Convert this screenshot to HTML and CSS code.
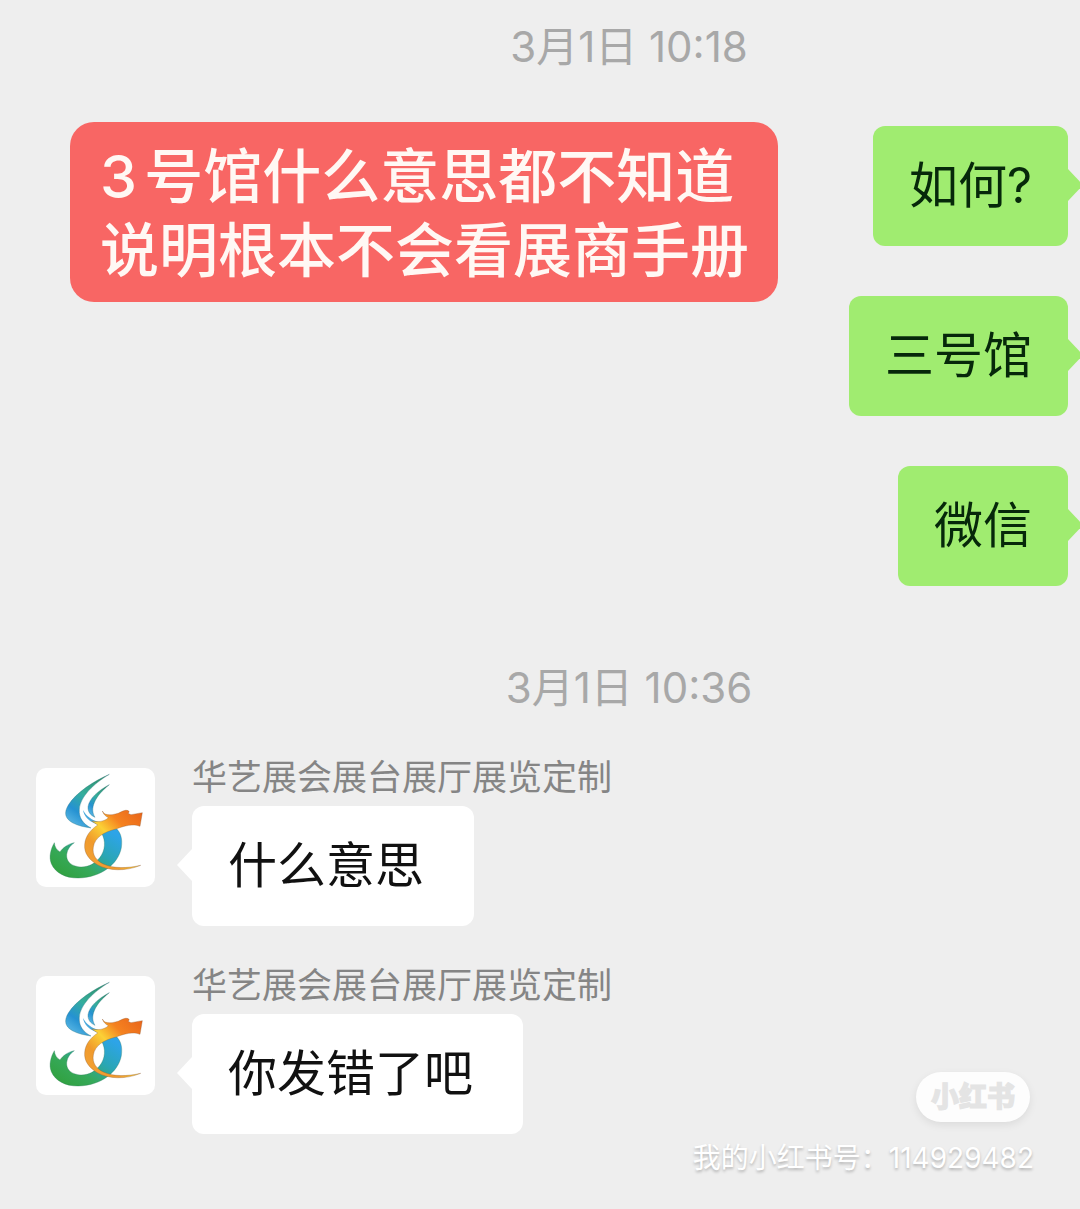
FILE: index.html
```
<!DOCTYPE html>
<html lang="zh-CN">
<head>
    <meta charset="UTF-8" />
    <meta name="viewport" content="width=device-width, initial-scale=1.0" />
    <title>聊天记录</title>
    <link rel="stylesheet" href="styles.css">
</head>
<body>
    <!-- logo compartido por los avatares -->
    <svg class="defs" aria-hidden="true">
        <defs>
            <linearGradient id="hoja" x1="0.8" y1="0" x2="0.2" y2="1">
                <stop offset="0" stop-color="#2f8f6a" />
                <stop offset="0.45" stop-color="#35ae9c" />
                <stop offset="0.75" stop-color="#2592d2" />
                <stop offset="1" stop-color="#5cb8e4" />
            </linearGradient>
            <linearGradient id="cuerpo" x1="1" y1="0" x2="0" y2="1">
                <stop offset="0.1" stop-color="#2da4e8" />
                <stop offset="0.4" stop-color="#2aa6b4" />
                <stop offset="0.65" stop-color="#36a95a" />
                <stop offset="1" stop-color="#2f9e35" />
            </linearGradient>
            <linearGradient id="dragon" x1="1" y1="0" x2="0" y2="1">
                <stop offset="0" stop-color="#e8631a" />
                <stop offset="0.3" stop-color="#f58220" />
                <stop offset="0.5" stop-color="#fbd136" />
                <stop offset="0.7" stop-color="#f09a2c" />
                <stop offset="1" stop-color="#f3a53a" />
            </linearGradient>
            <symbol id="logo" viewBox="30 38 357 357">
                <path fill="url(#hoja)" stroke="#2b6f78" stroke-width="1" d="M250 57C205 76 150 112 127 149C113 173 117 189 139 202C157 212 176 215 195 218C172 206 158 188 160 162C163 124 202 86 250 57Z" />
                <path fill="url(#hoja)" stroke="#2b6f78" stroke-width="1" d="M250 88C216 106 190 129 186 154C185 168 192 179 207 186C199 173 198 158 205 142C213 122 230 104 250 88Z" />
                <path fill="#4aa9dc" d="M171 164C174 184 190 202 222 209L216 199C200 195 181 184 171 164Z" />
                <path fill="url(#cuerpo)" stroke="#2c7a5c" stroke-width="1" d="M85 262C74 282 68 304 76 325C88 353 119 369 158 368C226 366 277 326 286 277C290 250 284 231 270 219L226 232C241 257 237 286 222 306C205 328 181 338 156 334C132 330 121 316 122 298C124 281 133 270 145 262C126 266 110 277 102 290C93 285 86 275 85 262Z" />
                <path fill="url(#dragon)" stroke="#8d5730" stroke-width="1" d="M229 167C235 179 249 181 268 176C281 174 287 167 298 165C309 164 313 170 306 174L315 178L349 172L342 213C321 204 294 212 270 221C233 230 207 246 202 275C198 299 211 316 232 326C261 340 304 339 344 330C298 349 247 347 214 328C189 313 174 293 176 268C178 242 193 224 215 209L197 197C221 202 239 196 247 187C239 183 232 177 229 167Z" />
            </symbol>
        </defs>
    </svg>

    <main class="chat">
        <time class="hora">3月1日 10:18</time>

        <section class="enviados">
            <h1 class="nota">3号馆什么意思都不知道<br>说明根本不会看展商手册</h1>
            <div class="lista">
                <p class="burbuja verde">如何?</p>
                <p class="burbuja verde">三号馆</p>
                <p class="burbuja verde">微信</p>
            </div>
        </section>

        <time class="hora">3月1日 10:36</time>

        <section class="recibidos">
            <article class="mensaje">
                <svg class="avatar" role="img" aria-label="华艺"><use href="#logo" /></svg>
                <div class="contenido">
                    <span class="nombre">华艺展会展台展厅展览定制</span>
                    <p class="burbuja blanca">什么意思</p>
                </div>
            </article>
            <article class="mensaje">
                <svg class="avatar" role="img" aria-label="华艺"><use href="#logo" /></svg>
                <div class="contenido">
                    <span class="nombre">华艺展会展台展厅展览定制</span>
                    <p class="burbuja blanca">你发错了吧</p>
                </div>
            </article>
        </section>

        <!-- marca de agua sobre la conversación -->
        <div class="marca">
            <span class="pildora">小红书</span>
            <span class="cuenta">我的小红书号：114929482</span>
        </div>
    </main>
</body>
</html>
```

FILE: styles.css
```
* {
    box-sizing: border-box;
}
body {
    margin: 0;
    background-color: #eeeeee;
    font-family: Inter, "Noto Sans CJK SC", sans-serif;
}
.defs {
    position: absolute;
    width: 0;
    height: 0;
}
.chat {
    position: relative;
    min-height: 100vh;
    padding: 22px 0 75px;
    overflow: hidden;
}
.hora {
    display: block;
    padding-left: 178px;
    text-align: center;
    font-size: 42px;
    line-height: 50px;
    color: #a8a8a8;
}
.enviados {
    display: flex;
    justify-content: space-between;
    align-items: flex-start;
    padding: 50px 12px 77px 70px;
}
.nota {
    margin: 0;
    padding: 18px 29px 14px 30px;
    border-radius: 24px;
    background-color: #f86664;
    color: #fff8f4;
    font-size: 59px;
    font-weight: 500;
    line-height: 74px;
    text-autospace: normal;
}
.lista {
    display: flex;
    flex-direction: column;
    align-items: flex-end;
    gap: 50px;
    padding-top: 4px;
}
.burbuja {
    position: relative;
    margin: 0;
    padding: 25px 36px;
    border-radius: 12px;
    font-size: 49px;
    line-height: 70px;
    color: #111111;
}
/* pico de la burbuja */
.burbuja::after {
    content: "";
    position: absolute;
    top: 43px;
    width: 15px;
    height: 32px;
}
.verde {
    background-color: #a0ec70;
    color: #06280a;
}
.verde::after {
    left: 100%;
    background-color: #a0ec70;
    clip-path: polygon(0 0, 100% 50%, 0 100%);
}
.blanca {
    padding-right: 50px;
    background-color: #ffffff;
}
.blanca::after {
    right: 100%;
    background-color: #ffffff;
    clip-path: polygon(100% 0, 0 50%, 100% 100%);
}
.recibidos {
    display: flex;
    flex-direction: column;
    gap: 38px;
    padding: 43px 36px 0;
}
.mensaje {
    display: flex;
    gap: 37px;
}
.avatar {
    width: 119px;
    height: 119px;
    margin-top: 12px;
    border-radius: 10px;
    background-color: #ffffff;
}
.contenido {
    display: flex;
    flex-direction: column;
    align-items: flex-start;
}
.nombre {
    padding-bottom: 8px;
    font-size: 35px;
    line-height: 42px;
    color: #858585;
}
.marca {
    position: absolute;
    right: 46px;
    bottom: 33px;
    display: flex;
    flex-direction: column;
    align-items: flex-end;
    gap: 18px;
}
.pildora {
    margin-right: 4px;
    padding: 0 15px;
    border-radius: 25px;
    background-color: #fdfdfd;
    box-shadow: 0 3px 8px rgba(0, 0, 0, 0.08);
    color: #e4e4e4;
    font-size: 28px;
    font-weight: 900;
    line-height: 50px;
    -webkit-text-stroke: 1px #e4e4e4;
}
.cuenta {
    font-size: 28px;
    line-height: 36px;
    color: #ffffff;
    text-shadow: 0 2px 3px rgba(0, 0, 0, 0.25);
}
```
